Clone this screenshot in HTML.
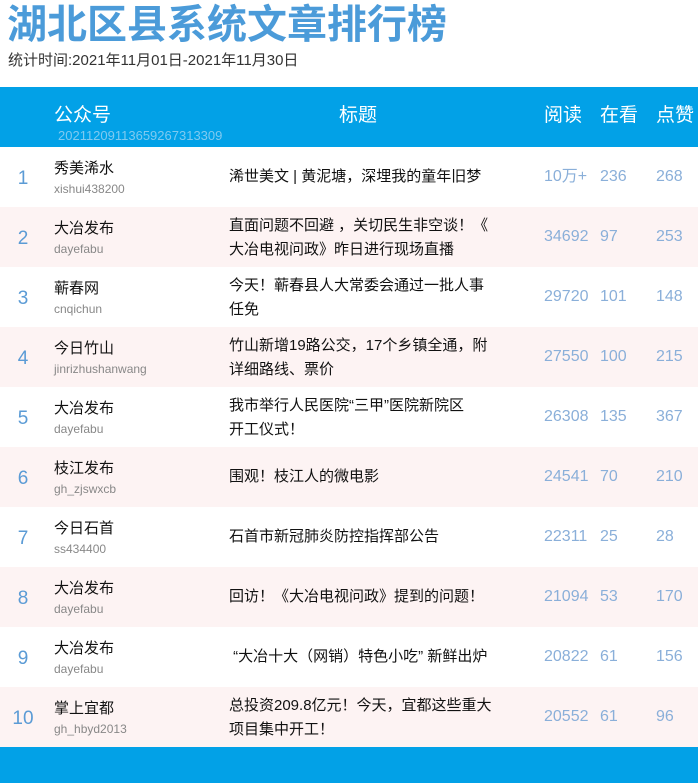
<!DOCTYPE html>
<html><head><meta charset="utf-8"><style>
*{margin:0;padding:0;box-sizing:border-box}
body{width:698px;height:783px;background:#fff;font-family:"Liberation Sans","Noto Sans CJK SC",sans-serif;position:relative;overflow:hidden}
.t{position:absolute;left:7px;top:2px;font-size:40px;font-weight:bold;color:#4b9bd9;line-height:46px;white-space:nowrap;letter-spacing:0px}
.s{position:absolute;left:8px;top:51px;font-size:15px;color:#333;line-height:20px}
.h{position:absolute;left:0;top:87px;width:698px;height:60px;background:#02a1e7;color:#fff}
.h span{position:absolute;font-size:19px;top:17px;line-height:24px}
.h .id{font-size:13px;color:#7fcaf0;top:41px;left:58px;line-height:16px}
.r{position:absolute;left:0;width:698px;height:60px}
.r.p{background:#fdf3f3}
.n{position:absolute;width:46px;text-align:center;top:20px;font-size:19px;color:#5b9bd5;line-height:24px}
.nm{position:absolute;left:54px;top:12px;font-size:15px;color:#111;line-height:20px}
.ac{position:absolute;left:54px;top:34px;font-size:12px;color:#888;line-height:16px}
.ti{position:absolute;left:229px;width:278px;font-size:15px;color:#111;line-height:24px}
.v{position:absolute;top:19px;font-size:16px;color:#8aafd9;line-height:22px}
.f{position:absolute;left:0;top:747px;width:698px;height:36px;background:#02a1e7}
</style></head><body>
<div class="t">湖北区县系统文章排行榜</div>
<div class="s">统计时间:2021年11月01日-2021年11月30日</div>
<div class="h"><span style="left:54px">公众号</span><span style="left:339px">标题</span><span style="left:544px">阅读</span><span style="left:600px">在看</span><span style="left:656px">点赞</span><div class="id" style="position:absolute">20211209113659267313309</div></div>

<div class="r" style="top:147px"><div class="n">1</div><div class="nm">秀美浠水</div><div class="ac">xishui438200</div><div class="ti" style="top:18px">浠世美文 | 黄泥塘，深埋我的童年旧梦</div><div class="v" style="left:544px">10万+</div><div class="v" style="left:600px">236</div><div class="v" style="left:656px">268</div></div>
<div class="r p" style="top:207px"><div class="n">2</div><div class="nm">大冶发布</div><div class="ac">dayefabu</div><div class="ti" style="top:7px">直面问题不回避 ，关切民生非空谈！《<br>大冶电视问政》昨日进行现场直播</div><div class="v" style="left:544px">34692</div><div class="v" style="left:600px">97</div><div class="v" style="left:656px">253</div></div>
<div class="r" style="top:267px"><div class="n">3</div><div class="nm">蕲春网</div><div class="ac">cnqichun</div><div class="ti" style="top:7px">今天！蕲春县人大常委会通过一批人事<br>任免</div><div class="v" style="left:544px">29720</div><div class="v" style="left:600px">101</div><div class="v" style="left:656px">148</div></div>
<div class="r p" style="top:327px"><div class="n">4</div><div class="nm">今日竹山</div><div class="ac">jinrizhushanwang</div><div class="ti" style="top:7px">竹山新增19路公交，17个乡镇全通，附<br>详细路线、票价</div><div class="v" style="left:544px">27550</div><div class="v" style="left:600px">100</div><div class="v" style="left:656px">215</div></div>
<div class="r" style="top:387px"><div class="n">5</div><div class="nm">大冶发布</div><div class="ac">dayefabu</div><div class="ti" style="top:7px">我市举行人民医院“三甲”医院新院区<br>开工仪式！</div><div class="v" style="left:544px">26308</div><div class="v" style="left:600px">135</div><div class="v" style="left:656px">367</div></div>
<div class="r p" style="top:447px"><div class="n">6</div><div class="nm">枝江发布</div><div class="ac">gh_zjswxcb</div><div class="ti" style="top:18px">围观！枝江人的微电影</div><div class="v" style="left:544px">24541</div><div class="v" style="left:600px">70</div><div class="v" style="left:656px">210</div></div>
<div class="r" style="top:507px"><div class="n">7</div><div class="nm">今日石首</div><div class="ac">ss434400</div><div class="ti" style="top:18px">石首市新冠肺炎防控指挥部公告</div><div class="v" style="left:544px">22311</div><div class="v" style="left:600px">25</div><div class="v" style="left:656px">28</div></div>
<div class="r p" style="top:567px"><div class="n">8</div><div class="nm">大冶发布</div><div class="ac">dayefabu</div><div class="ti" style="top:18px">回访！《大冶电视问政》提到的问题！</div><div class="v" style="left:544px">21094</div><div class="v" style="left:600px">53</div><div class="v" style="left:656px">170</div></div>
<div class="r" style="top:627px"><div class="n">9</div><div class="nm">大冶发布</div><div class="ac">dayefabu</div><div class="ti" style="top:18px">&nbsp;“大冶十大（网销）特色小吃” 新鲜出炉</div><div class="v" style="left:544px">20822</div><div class="v" style="left:600px">61</div><div class="v" style="left:656px">156</div></div>
<div class="r p" style="top:687px"><div class="n">10</div><div class="nm">掌上宜都</div><div class="ac">gh_hbyd2013</div><div class="ti" style="top:7px">总投资209.8亿元！今天，宜都这些重大<br>项目集中开工！</div><div class="v" style="left:544px">20552</div><div class="v" style="left:600px">61</div><div class="v" style="left:656px">96</div></div>
<div class="f"></div>
</body></html>
